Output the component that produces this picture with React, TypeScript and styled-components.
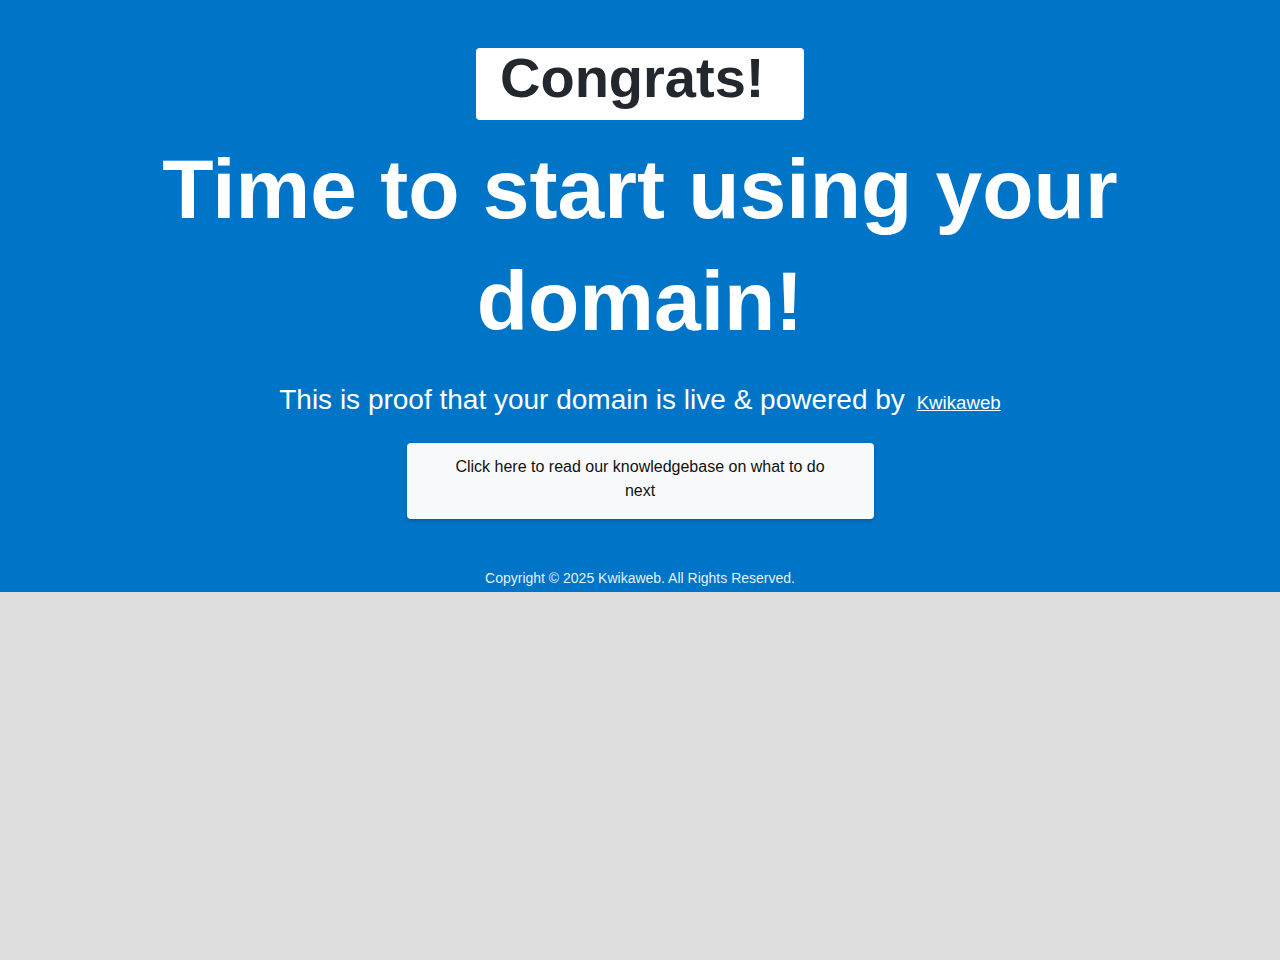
import React from "react";
import styled, { createGlobalStyle } from "styled-components";

const GlobalStyle = createGlobalStyle`
  html, body {
    margin: 0;
    padding: 0;
    background: #dddddd;
    font-family: "Liberation Sans", Arial, Helvetica, sans-serif;
  }
`;

const Hero = styled.section`
  background: #0075c8;
  color: #ffffff;
  display: flex;
  flex-direction: column;
  align-items: center;
  text-align: center;
  padding: 48px 20px 3px;
`;

const Badge = styled.div`
  background: #ffffff;
  color: #23272e;
  border-radius: 4px;
  font-size: 56px;
  font-weight: 700;
  line-height: 59px;
  padding: 0 40px 13px 24px;
  text-align: left;
  width: 328px;
  box-sizing: border-box;
`;

const Title = styled.h1`
  margin: 13px 0 0;
  font-size: 84px;
  font-weight: 700;
  line-height: 112px;
  max-width: 1000px;
`;

const Lead = styled.p`
  margin: 22px 0 0;
  font-size: 28px;
  line-height: 42px;
`;

const Link = styled.a`
  color: #ffffff;
  font-size: 18.7px;
  text-decoration: underline;
  margin-left: 4px;
`;

const ActionButton = styled.a`
  display: block;
  margin-top: 19px;
  width: 467px;
  box-sizing: border-box;
  padding: 12px 48px 16px;
  background: #f8f9fa;
  color: #111111;
  font-size: 16px;
  line-height: 24px;
  text-decoration: none;
  border-radius: 4px;
  box-shadow: 0 2px 4px rgba(0, 0, 0, 0.2);
`;

const Footer = styled.footer`
  margin-top: 49px;
  font-size: 14px;
  line-height: 21px;
  color: rgba(255, 255, 255, 0.92);
`;

export default function App() {
  return (
    <>
      <GlobalStyle />
      <Hero>
        <Badge>Congrats!</Badge>
        <Title>Time to start using your domain!</Title>
        <Lead>
          This is proof that your domain is live &amp; powered by{" "}
          <Link href="#">Kwikaweb</Link>
        </Lead>
        <ActionButton href="#">
          Click here to read our knowledgebase on what to do next
        </ActionButton>
        <Footer>Copyright © 2025 Kwikaweb. All Rights Reserved.</Footer>
      </Hero>
    </>
  );
}
